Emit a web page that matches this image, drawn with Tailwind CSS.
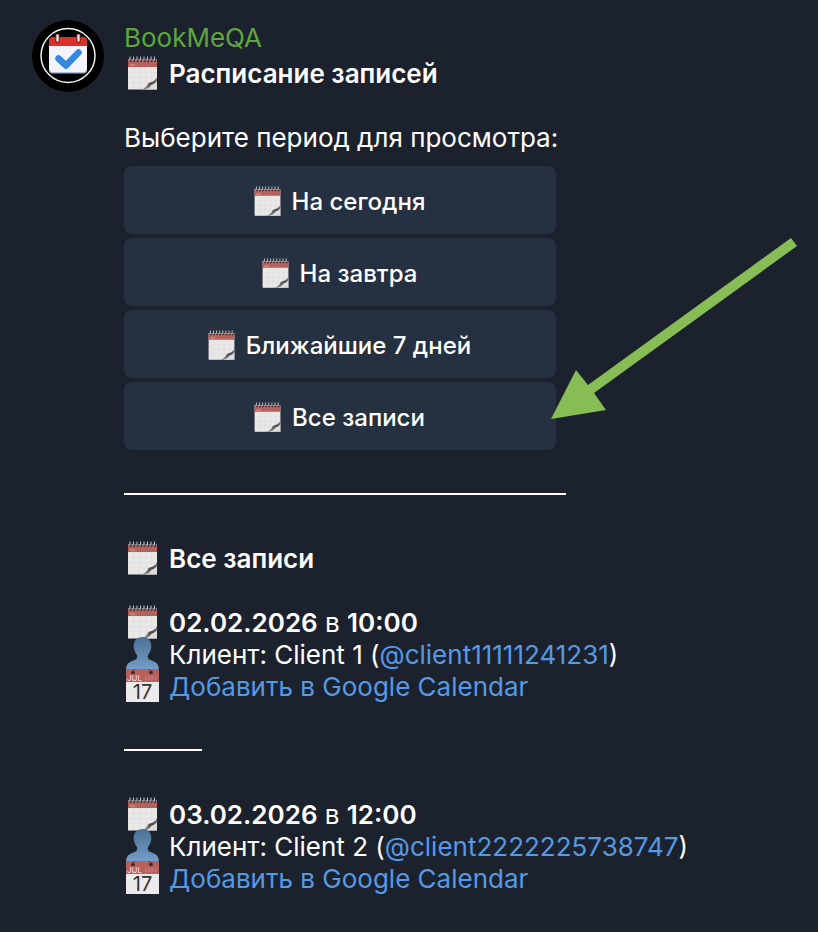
<!DOCTYPE html>
<html lang="ru">
<head>
    <meta charset="UTF-8">
    <meta name="viewport" content="width=device-width, initial-scale=1.0">
    <title>BookMeQA</title>
    <script src="https://cdn.jsdelivr.net/npm/@tailwindcss/browser@4"></script>
</head>
<body class="min-h-screen bg-[#1c222d] font-['Inter','Liberation_Sans',sans-serif] text-[26px] leading-8 text-white">

    <!-- Shared icons (not display:none, the gradients would stop working) -->
    <svg class="absolute size-0" aria-hidden="true">
        <linearGradient id="bust-fill" x1="0" y1="0" x2="0" y2="1">
            <stop offset="0" stop-color="#4a7096"/>
            <stop offset="1" stop-color="#779ec8"/>
        </linearGradient>
        <linearGradient id="curl-fill" x1="0" y1="1" x2="1" y2="0">
            <stop offset="0" stop-color="#a5a4a2"/>
            <stop offset="0.6" stop-color="#4d4b49"/>
            <stop offset="1" stop-color="#8b8987"/>
        </linearGradient>
        <symbol id="notepad" viewBox="0 0 37 36">
            <path d="M4 3.500h29v30H4z" fill="#e9e8e7"/>
            <path d="M4 4h29v7H4z" fill="#b8605d"/>
            <path d="M6 9h5" stroke="#dba3a0"/>
            <path d="M4 16.500h29M4 21.500h29M4 26.500h22M9.500 11v22M15.500 11v22M21.500 11v19M27.500 11v15" stroke="#dedddc" stroke-width=".7"/>
            <path d="M33 21.500c-2.500 3.500-5 4.500-8.500 5.500-1.500 3-3.500 5.500-7.500 6.500h16z" fill="url(#curl-fill)"/>
            <path d="M33 25c-1.500 2.200-3.500 3-5.500 3.800-1.500 2.400-3.500 4-6.500 4.700h12z" fill="#dededd"/>
            <path d="M6.500 2v4M10 2v4M13.500 2v4M17 2v4M20.500 2v4M24 2v4M27.500 2v4M31 2v4" stroke="#3d3534" stroke-width="1.800"/>
            <path d="M6 .5v4M9.500 .5v4M13 .5v4M16.500 .5v4M20 .5v4M23.500 .5v4M27 .5v4M30.500 .5v4" stroke="#b4b9bd" stroke-width="1.100"/>
        </symbol>
        <symbol id="bust" viewBox="0 0 37 36">
            <path d="M18.500 0c5.500 0 9 3.800 8.800 9.500-.1 3.500-1.800 6.300-3.300 8.500-.8 3 .2 4.300 3 5.300 5 1.700 8 3.700 8 9.700H2c0-6 3-8 8-9.700 2.800-1 3.800-2.300 3-5.300-1.500-2.200-3.200-5-3.300-8.500C9.500 3.800 13 0 18.500 0z" fill="url(#bust-fill)"/>
        </symbol>
        <symbol id="calendar" viewBox="0 0 37 36">
            <path d="M2 0h33v33H2z" fill="#ebebeb"/>
            <path d="M2 0h33v13H2z" fill="#b8605d"/>
            <circle cx="9" cy="3.500" r="1.800" fill="#2a2024"/>
            <circle cx="27" cy="3.500" r="1.800" fill="#2a2024"/>
            <path d="M9 3.500 10 0M27 3.500 25 0" stroke="#4b3b3e"/>
            <path d="M21 9h12" stroke="#c07572" stroke-width="4" stroke-dasharray="2 1"/>
        </symbol>
    </svg>

    <main class="flex items-start gap-5 px-8 py-5">
        <svg class="size-18 shrink-0" viewBox="0 0 72 72" role="img" aria-label="BookMeQA">
            <circle cx="36" cy="36" r="36" fill="#000"/>
            <circle cx="36" cy="35.500" r="27" fill="none" stroke="#f2f2f2" stroke-width="1.500"/>
            <rect x="17" y="19" width="38" height="34.500" rx="4" fill="#aebbd4"/>
            <rect x="17" y="18" width="38" height="34" rx="4" fill="#f3f4fb"/>
            <path d="M17 26v-5q0-4 4-4h30q4 0 4 4v5z" fill="#dc3129"/>
            <path d="M25.500 16v5M46.500 16v5" stroke="#8e1c18" stroke-width="4.500" stroke-linecap="round"/>
            <path d="M25.500 15.500v5M46.500 15.500v5" stroke="#e6e6e6" stroke-width="2.400" stroke-linecap="round"/>
            <path d="M26.500 38.500l7.500 7L46.500 32.500" fill="none" stroke="#3587df" stroke-width="6.500" stroke-linecap="round" stroke-linejoin="round"/>
        </svg>

        <div class="min-w-0 flex-1 pt-0.5">
            <p class="mb-1 text-[#5fa63c]">BookMeQA</p>
            <h1 class="flex h-8 items-center gap-2 font-semibold">
                <svg class="h-9 w-[37px] shrink-0"><use href="#notepad"/></svg>
                Расписание записей
            </h1>
            <p class="mt-8">Выберите период для просмотра:</p>

            <div class="relative mt-3 flex w-full max-w-[432px] flex-col gap-1 text-2xl font-medium">
                <button type="button" class="flex h-17 items-center justify-center gap-2 rounded-lg bg-[#253040] pt-1 pr-1">
                    <svg class="h-8 w-[33px] shrink-0"><use href="#notepad"/></svg>
                    На сегодня
                </button>
                <button type="button" class="flex h-17 items-center justify-center gap-2 rounded-lg bg-[#253040] pt-1 pr-1">
                    <svg class="h-8 w-[33px] shrink-0"><use href="#notepad"/></svg>
                    На завтра
                </button>
                <button type="button" class="flex h-17 items-center justify-center gap-2 rounded-lg bg-[#253040] pt-1 pr-1">
                    <svg class="h-8 w-[33px] shrink-0"><use href="#notepad"/></svg>
                    Ближайшие 7 дней
                </button>
                <button type="button" class="flex h-17 items-center justify-center gap-2 rounded-lg bg-[#253040] pt-1 pr-1">
                    <svg class="h-8 w-[33px] shrink-0"><use href="#notepad"/></svg>
                    Все записи
                </button>

                <!-- Arrow pointing at the last button -->
                <svg class="pointer-events-none absolute top-18 left-[427px] h-[181px] w-[246px]" viewBox="0 0 246 181" aria-hidden="true">
                    <path d="M240 0l6 8L43 155l12 17L0 181 25 132l12 15z" fill="#88bd55"/>
                </svg>
            </div>

            <hr class="mt-[43px] mb-12 w-full max-w-[442px] border-t-2 border-white">

            <h2 class="flex h-8 items-center gap-2 font-semibold">
                <svg class="h-9 w-[37px] shrink-0"><use href="#notepad"/></svg>
                Все записи
            </h2>

            <section class="mt-8">
                <p class="flex h-8 items-center gap-2">
                    <svg class="h-9 w-[37px] shrink-0"><use href="#notepad"/></svg>
                    <span><b class="font-semibold">02.02.2026</b> в <b class="font-semibold">10:00</b></span>
                </p>
                <p class="flex h-8 items-center gap-2">
                    <svg class="h-9 w-[37px] shrink-0"><use href="#bust"/></svg>
                    <span>Клиент: Client 1 (<a href="#" class="text-[#549ae6]">@client11111241231</a>)</span>
                </p>
                <p class="flex h-8 items-center gap-2">
                    <svg class="h-9 w-[37px] shrink-0" viewBox="0 0 37 36">
                        <use href="#calendar"/>
                        <text x="3" y="11.500" font-size="8" font-weight="500" fill="#ecd4d3">JUL</text>
                        <text x="18.500" y="30" font-size="20" text-anchor="middle" fill="#333">17</text>
                    </svg>
                    <a href="#" class="text-[#549ae6]">Добавить в Google Calendar</a>
                </p>
            </section>

            <hr class="mt-[46px] mb-12 w-[78px] border-t-2 border-white">

            <section>
                <p class="flex h-8 items-center gap-2">
                    <svg class="h-9 w-[37px] shrink-0"><use href="#notepad"/></svg>
                    <span><b class="font-semibold">03.02.2026</b> в <b class="font-semibold">12:00</b></span>
                </p>
                <p class="flex h-8 items-center gap-2">
                    <svg class="h-9 w-[37px] shrink-0"><use href="#bust"/></svg>
                    <span>Клиент: Client 2 (<a href="#" class="text-[#549ae6]">@client2222225738747</a>)</span>
                </p>
                <p class="flex h-8 items-center gap-2">
                    <svg class="h-9 w-[37px] shrink-0" viewBox="0 0 37 36">
                        <use href="#calendar"/>
                        <text x="3" y="11.500" font-size="8" font-weight="500" fill="#ecd4d3">JUL</text>
                        <text x="18.500" y="30" font-size="20" text-anchor="middle" fill="#333">17</text>
                    </svg>
                    <a href="#" class="text-[#549ae6]">Добавить в Google Calendar</a>
                </p>
            </section>
        </div>
    </main>
</body>
</html>
